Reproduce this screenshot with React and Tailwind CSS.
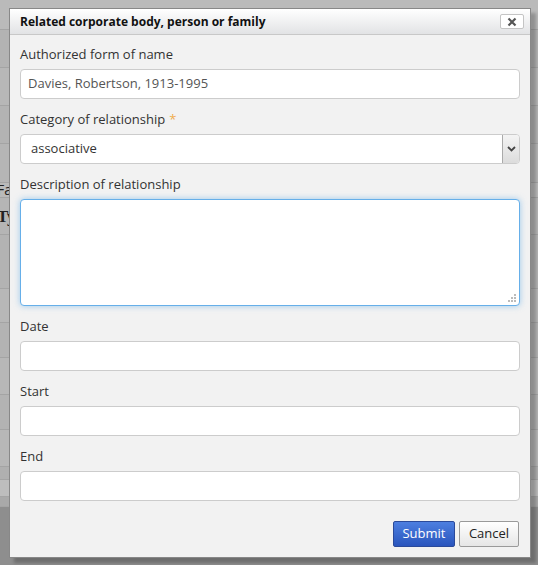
const font = { fontFamily: '"Open Sans", "Noto Sans", sans-serif' };

// page behind the modal overlay (rows of a table, greyed out)
const bgRows = [
  { h: 30, c: "bg-[#bababa]" },
  { h: 38, c: "bg-[#b3b3b3]" },
  { h: 38, c: "bg-[#b7b7b7]" },
  { h: 38, c: "bg-[#b3b3b3]" },
  { h: 39, c: "bg-[#b5b5b5]" },
  { h: 15, c: "bg-[#bababa]", t: "Fa" },
  { h: 37, c: "bg-[#b5b5b5]", t: "Ty", bold: true },
  { h: 54, c: "bg-[#b3b3b3]" },
  { h: 34, c: "bg-[#b7b7b7]" },
  { h: 35, c: "bg-[#b3b3b3]" },
  { h: 37, c: "bg-[#b7b7b7]" },
  { h: 35, c: "bg-[#b3b3b3]" },
  { h: 37, c: "bg-[#b7b7b7]" },
  { h: 13, c: "bg-[#b0b0b0]" },
  { h: 17, c: "bg-[#bdbdbd]" },
  { h: 10, c: "bg-[#a9a9a9]" },
];

function Field({ label, required, children }) {
  return (
    <div className="mb-[10px]">
      <div className="text-[13px] leading-[20px] text-[#333] mb-[5px]">
        {label}
        {required && <span className="text-[#f0ad4e] ml-1">*</span>}
      </div>
      {children}
    </div>
  );
}

function TextInput({ value }) {
  return (
    <div className="h-[30px] bg-white border border-[#ccc] rounded-[4px] px-[7px] flex items-center text-[13px] text-[#555]">
      {value}
    </div>
  );
}

export default function App() {
  return (
    <div className="relative w-[538px] h-[565px] overflow-hidden bg-[#8e8e8e]" style={font}>
      <div className="flex flex-col">
        {bgRows.map((r, i) => (
          <div
            key={i}
            className={`${r.c} border-b border-[#a4a4a4] flex items-center overflow-hidden`}
            style={{ height: r.h }}
          >
            {r.t && (
              <span
                className={`ml-[-3px] text-[14px] leading-none text-[#222] ${r.bold ? "font-bold" : ""}`}
                style={r.bold ? { fontFamily: '"Liberation Serif", serif', fontSize: 17 } : {}}
              >
                {r.t}
              </span>
            )}
          </div>
        ))}
      </div>

      <div className="absolute left-[9px] top-[8px] w-[522px] h-[550px] bg-[#f2f2f2] border border-[#888] shadow-[5px_5px_3px_rgba(0,0,0,0.22)] flex flex-col">
        <div className="h-[26px] shrink-0 flex items-center justify-between pl-[10px] pr-[6px] bg-gradient-to-b from-white to-[#e2e3e5] border-b border-[#c8c8c8]">
          <span className="text-[12px] font-bold text-[#111]">
            Related corporate body, person or family
          </span>
          <div className="w-[24px] h-[15px] bg-white border border-[#c4c4c4] rounded-[2px] flex items-center justify-center">
            <svg width="10" height="10" viewBox="0 0 10 10">
              <path d="M1.5 1.5 L8.5 8.5 M8.5 1.5 L1.5 8.5" stroke="#555" strokeWidth="2.2" />
            </svg>
          </div>
        </div>

        <div className="px-[10px] pt-[9px] flex flex-col">
          <Field label="Authorized form of name">
            <TextInput value="Davies, Robertson, 1913-1995" />
          </Field>
          <Field label="Category of relationship" required>
            <div className="h-[30px] bg-white border border-[#ccc] rounded-[4px] flex items-stretch text-[13px] text-[#333]">
              <div className="flex-1 flex items-center pl-[10px]">associative</div>
              <div className="w-[17px] border-l border-[#aaa] bg-gradient-to-b from-[#f4f4f4] to-[#dcdcdc] rounded-r-[3px] flex items-center justify-center">
                <svg width="9" height="6" viewBox="0 0 9 6">
                  <path d="M1 1 L4.5 4.5 L8 1" stroke="#444" strokeWidth="1.8" fill="none" />
                </svg>
              </div>
            </div>
          </Field>
          <Field label="Description of relationship">
            <div className="relative h-[107px] bg-white border border-[#66afe9] rounded-[4px] shadow-[0_0_6px_rgba(102,175,233,0.6)]">
              <svg className="absolute right-[2px] bottom-[2px]" width="9" height="9" viewBox="0 0 9 9">
                <rect x="6" y="0" width="2" height="2" fill="#bbb" />
                <rect x="3" y="3" width="2" height="2" fill="#bbb" />
                <rect x="6" y="3" width="2" height="2" fill="#bbb" />
                <rect x="0" y="6" width="2" height="2" fill="#bbb" />
                <rect x="3" y="6" width="2" height="2" fill="#bbb" />
                <rect x="6" y="6" width="2" height="2" fill="#bbb" />
              </svg>
            </div>
          </Field>
          <Field label="Date">
            <TextInput value="" />
          </Field>
          <Field label="Start">
            <TextInput value="" />
          </Field>
          <Field label="End">
            <TextInput value="" />
          </Field>
          <div className="flex justify-end gap-[4px] mt-[10px] pr-[1px]">
            <button className="h-[26px] w-[62px] text-[13px] text-white rounded-[2px] border border-[#2b4a9a] bg-gradient-to-b from-[#4d7fe0] to-[#2a55bd]">
              Submit
            </button>
            <button className="h-[26px] w-[60px] text-[13px] text-[#222] rounded-[2px] border border-[#9a9a9a] bg-gradient-to-b from-white to-[#e6e6e6]">
              Cancel
            </button>
          </div>
        </div>
      </div>
    </div>
  );
}
